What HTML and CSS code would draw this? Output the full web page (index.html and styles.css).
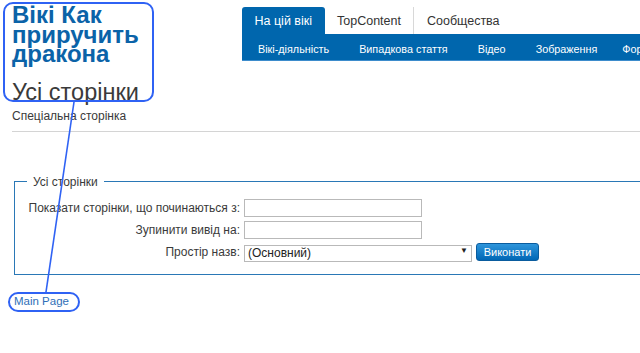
FILE: index.html
```html
<!DOCTYPE html>
<html lang="uk">
<head>
<meta charset="utf-8">
<title>Усі сторінки</title>
<link rel="stylesheet" href="styles.css">
</head>
<body>
<div class="page">
  <header class="top">
    <div class="brand">
      <div class="wiki-name">Вікі Как приручить дракона</div>
      <h1 class="title">Усі сторінки</h1>
    </div>
    <nav class="nav">
      <ul class="tabs">
        <li class="tab active">На цій вікі</li>
        <li class="tab">TopContent</li>
        <li class="tab sep">Сообщества</li>
      </ul>
      <ul class="subnav">
        <li>Вікі-діяльність</li>
        <li>Випадкова стаття</li>
        <li>Відео</li>
        <li>Зображення</li>
        <li class="last">Форум</li>
      </ul>
    </nav>
  </header>
  <div class="subtitle">Спеціальна сторінка</div>
  <div class="rule"></div>
  <form class="form">
    <fieldset class="box">
      <legend class="legend">Усі сторінки</legend>
      <div class="grid">
        <label class="lbl">Показати сторінки, що починаються з:</label>
        <div class="field"><input class="inp" type="text"></div>
        <label class="lbl">Зупинити вивід на:</label>
        <div class="field"><input class="inp" type="text"></div>
        <label class="lbl">Простір назв:</label>
        <div class="field row">
          <div class="sel-wrap">
            <select class="sel"><option>(Основний)</option></select>
            <span class="arrow">▼</span>
          </div>
          <button class="btn" type="button">Виконати</button>
        </div>
      </div>
    </fieldset>
  </form>
  <div class="footer-link"><a class="main-link" href="#">Main Page</a></div>

  <div class="hl hl-head"></div>
  <div class="hl hl-main"></div>
  <svg class="connector" width="640" height="353" viewBox="0 0 640 353">
    <line x1="74" y1="102" x2="46" y2="292" stroke="#2f62f4" stroke-width="1.6"/>
  </svg>
</div>
</body>
</html>
```

FILE: styles.css
```css
* { box-sizing: border-box; }
html, body { margin: 0; padding: 0; }
body {
  width: 640px;
  height: 353px;
  overflow: hidden;
  background: #fff;
  font-family: "Liberation Sans", Arial, sans-serif;
  color: #3a3a3a;
}
.page { position: relative; width: 640px; height: 353px; overflow: hidden; }

.top { display: flex; align-items: flex-start; padding-left: 12px; }
.brand { width: 230px; flex: none; padding-top: 5px; }
.wiki-name {
  width: 140px;
  font-weight: bold;
  font-size: 24px;
  line-height: 19.5px;
  color: #0b63a8;
}
.title {
  margin: 15px 0 0;
  font-weight: normal;
  font-size: 23.5px;
  line-height: 26px;
  color: #3a3a3a;
}

.nav { flex: 1; min-width: 0; margin-top: 7px; margin-right: -200px; }
.tabs { list-style: none; margin: 0; padding: 0; display: flex; height: 27px; }
.tab {
  padding: 2px 12.5px 0;
  font-size: 12.5px;
  line-height: 25px;
  color: #333;
  white-space: nowrap;
}
.tab.active { background: #0066ad; color: #fff; border-radius: 3px 3px 0 0; }
.tab.sep { border-left: 1px solid #d8d8d8; }
.subnav {
  list-style: none;
  margin: 0;
  padding: 0 0 0 1px;
  display: flex;
  height: 27px;
  background: #0066ad;
  border-bottom: 1px solid #3d8ccc;
  white-space: nowrap;
}
.subnav li {
  padding: 4px 15px 0;
  font-size: 10.8px;
  line-height: 22px;
  color: #fff;
}
.subnav li.last { padding-left: 10px; }

.subtitle { margin: 4px 0 0 12px; font-size: 12px; line-height: 14px; color: #3a3a3a; }
.rule { margin: 8px 0 0 12px; height: 1px; background: #d4d4d4; }

.form { margin: 43px 0 0 14px; }
.box {
  margin: 0 -20px 0 0;
  padding: 10px 0 13px 12px;
  border: 1px solid #2a78b6;
  border-right: none;
  min-width: 0;
}
.legend { padding: 0 6px; font-size: 12px; line-height: 14px; color: #3a3a3a; }
.grid { display: grid; grid-template-columns: 213px auto; column-gap: 4px; row-gap: 4px; align-items: center; }
.lbl { text-align: right; font-size: 12px; line-height: 18px; color: #3a3a3a; white-space: nowrap; }
.field { display: flex; align-items: center; }
.inp {
  width: 178px;
  height: 18px;
  margin: 0;
  padding: 1px 3px;
  border: 1px solid #b9b9b9;
  background: #fff;
  font: 12px "Liberation Sans", Arial, sans-serif;
}
.row { gap: 4px; }
.sel-wrap { position: relative; width: 228px; height: 17px; }
.sel {
  appearance: none;
  -webkit-appearance: none;
  width: 228px;
  height: 17px;
  margin: 0;
  padding: 0 3px;
  border: 1px solid #b9b9b9;
  border-radius: 0;
  background: #fff;
  color: #222;
  font: 12px/15px "Liberation Sans", Arial, sans-serif;
}
.arrow {
  position: absolute;
  right: 4px;
  top: 3px;
  font-size: 8px;
  line-height: 10px;
  color: #222;
  pointer-events: none;
}
.btn {
  height: 18px;
  width: 63px;
  margin: 0;
  padding: 0;
  border: 1px solid #0a5c9e;
  border-radius: 3px;
  background: linear-gradient(#2e95db, #0067b5);
  color: #fff;
  font: 11px/16px "Liberation Sans", Arial, sans-serif;
}

.footer-link { margin: 19px 0 0 14px; font-size: 11.5px; line-height: 14px; }
.main-link { color: #2f6fb8; text-decoration: none; }

.hl {
  position: absolute;
  border: 2px solid #2f62f4;
  border-radius: 10px;
  pointer-events: none;
}
.hl-head { left: 3px; top: 2px; width: 151px; height: 100px; }
.hl-main { left: 8px; top: 292px; width: 72px; height: 20px; }
.connector { position: absolute; left: 0; top: 0; pointer-events: none; }
```
